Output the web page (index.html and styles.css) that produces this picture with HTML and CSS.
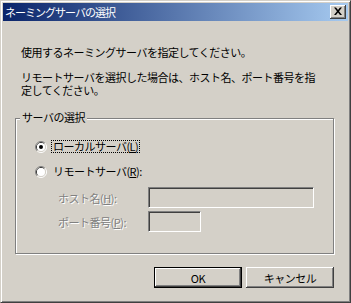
FILE: index.html
```html
<!DOCTYPE html>
<html lang="ja">
<head>
<meta charset="utf-8">
<title>ネーミングサーバの選択</title>
<link rel="stylesheet" href="styles.css">
</head>
<body>
<div class="window">
  <div class="titlebar">
    <span class="title">ネーミングサーバの選択</span>
    <span class="close">
      <svg width="10" height="9" viewBox="0 0 10 9"><path d="M1 0.5h2l2 2.5 2-2.5h2l-3 3.8 3 3.7h-2l-2-2.5-2 2.5h-2l3-3.7z" fill="#000"/></svg>
    </span>
  </div>
  <div class="content">
    <p class="msg">使用するネーミングサーバを指定してください。</p>
    <p class="msg second">リモートサーバを選択した場合は、ホスト名、ポート番号を指<br>定してください。</p>
    <div class="group">
      <span class="legend">サーバの選択</span>
      <div class="radio-row">
        <svg class="radio" width="12" height="12" viewBox="0 0 12 12">
          <path d="M2.11 9.89A5.5 5.5 0 0 1 9.89 2.11" fill="none" stroke="#808080"/>
          <path d="M9.89 2.11A5.5 5.5 0 0 1 2.11 9.89" fill="none" stroke="#fff"/>
          <path d="M2.82 9.18A4.5 4.5 0 0 1 9.18 2.82" fill="none" stroke="#404040"/>
          <path d="M9.18 2.82A4.5 4.5 0 0 1 2.82 9.18" fill="none" stroke="#d4d0c8"/>
          <circle cx="6" cy="6" r="4" fill="#fff"/>
          <circle cx="6" cy="6" r="2" fill="#000"/>
        </svg>
        <span class="rlabel focus">ローカルサーバ(<u>L</u>)</span>
      </div>
      <div class="radio-row second-radio">
        <svg class="radio" width="12" height="12" viewBox="0 0 12 12">
          <path d="M2.11 9.89A5.5 5.5 0 0 1 9.89 2.11" fill="none" stroke="#808080"/>
          <path d="M9.89 2.11A5.5 5.5 0 0 1 2.11 9.89" fill="none" stroke="#fff"/>
          <path d="M2.82 9.18A4.5 4.5 0 0 1 9.18 2.82" fill="none" stroke="#404040"/>
          <path d="M9.18 2.82A4.5 4.5 0 0 1 2.82 9.18" fill="none" stroke="#d4d0c8"/>
          <circle cx="6" cy="6" r="4" fill="#fff"/>
        </svg>
        <span class="rlabel">リモートサーバ(<u>R</u>):</span>
      </div>
      <div class="field-row host">
        <span class="flabel">ホスト名(<u>H</u>):</span>
        <span class="input wide"></span>
      </div>
      <div class="field-row port">
        <span class="flabel">ポート番号(<u>P</u>):</span>
        <span class="input narrow"></span>
      </div>
    </div>
    <div class="buttons">
      <span class="btn default"><span class="btn-inner">OK</span></span>
      <span class="btn"><span class="btn-inner">キャンセル</span></span>
    </div>
  </div>
</div>
</body>
</html>
```

FILE: styles.css
```css
html, body {
  margin: 0;
  padding: 0;
  background: #d4d0c8;
}

body {
  font-family: "Noto Sans CJK JP", "Noto Sans", sans-serif;
  font-size: 11px;
  line-height: 12px;
  color: #000;
}

.window {
  width: 351px;
  height: 303px;
  box-sizing: border-box;
  background: #d4d0c8;
  border: 1px solid;
  border-color: #d4d0c8 #404040 #404040 #d4d0c8;
  box-shadow: inset 1px 1px 0 #fff, inset -1px -1px 0 #808080;
  padding: 2px;
  display: flex;
  flex-direction: column;
}

.titlebar {
  height: 18px;
  flex: none;
  display: flex;
  align-items: center;
  justify-content: space-between;
  padding: 0 2px 0 2px;
  background: linear-gradient(to right, #0a246a, #a6caf0);
}

.title {
  color: #fff;
  font-size: 11px;
  letter-spacing: -1px;
  line-height: 12px;
}

.close {
  width: 16px;
  height: 14px;
  box-sizing: border-box;
  background: #d4d0c8;
  box-shadow: inset -1px -1px 0 #404040, inset 1px 1px 0 #fff, inset -2px -2px 0 #808080;
  display: flex;
  align-items: center;
  justify-content: center;
  padding: 0 1px 1px 0;
}

.close svg {
  display: block;
}

.content {
  flex: 1;
  padding: 25px 14px 0 12px;
  display: flex;
  flex-direction: column;
}

.msg {
  margin: 0 0 0 6px;
  letter-spacing: -0.5px;
  white-space: nowrap;
}

.msg.second {
  margin-top: 13px;
  line-height: 13px;
}

.group {
  position: relative;
  margin-top: 21px;
  height: 136px;
  box-sizing: border-box;
  border: 1px solid #808080;
  box-shadow: 1px 1px 0 #fff, inset 1px 1px 0 #fff;
  padding: 21px 0 0 19px;
  flex: none;
}

.legend {
  position: absolute;
  left: 4px;
  top: -8px;
  padding: 0 2px;
  background: #d4d0c8;
  letter-spacing: -0.5px;
}

.radio-row {
  height: 13px;
  display: flex;
  align-items: center;
}

.radio {
  display: block;
  flex: none;
}

.second-radio {
  margin-top: 12px;
}

.rlabel {
  margin-left: 4px;
  padding: 0 1px;
  border: 1px solid transparent;
  letter-spacing: -0.5px;
  line-height: 11px;
}

.rlabel.focus {
  border: 1px dotted #000;
}

.field-row {
  height: 21px;
  display: flex;
  align-items: center;
}

.field-row.host {
  margin-top: 9px;
}

.field-row.port {
  margin-top: 3px;
}

.flabel {
  width: 90px;
  margin-left: 23px;
  flex: none;
  color: #808080;
  text-shadow: 1px 1px 0 #fff;
  letter-spacing: -0.5px;
}

.input {
  display: block;
  height: 21px;
  box-sizing: border-box;
  background: #d4d0c8;
  border: 1px solid;
  border-color: #808080 #fff #fff #808080;
  box-shadow: inset 1px 1px 0 #404040, inset -1px -1px 0 #d4d0c8;
}

.input.wide {
  width: 166px;
}

.input.narrow {
  width: 53px;
}

.buttons {
  margin-top: 13px;
  display: flex;
  justify-content: flex-end;
  gap: 4px;
}

.btn {
  width: 88px;
  height: 21px;
  box-sizing: border-box;
  background: #d4d0c8;
  box-shadow: inset -1px -1px 0 #404040, inset 1px 1px 0 #fff, inset -2px -2px 0 #808080;
  display: flex;
}

.btn.default {
  border: 1px solid #000;
  box-shadow: none;
}

.btn-inner {
  flex: 1;
  display: flex;
  align-items: center;
  justify-content: center;
  letter-spacing: -0.5px;
}

.btn.default .btn-inner {
  box-shadow: inset -1px -1px 0 #404040, inset 1px 1px 0 #fff, inset -2px -2px 0 #808080;
}
```
